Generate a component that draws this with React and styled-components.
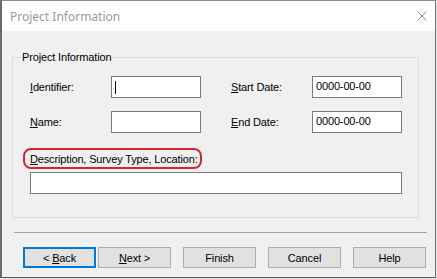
import React from 'react'
import styled, { createGlobalStyle } from 'styled-components';

const GlobalStyle = createGlobalStyle`
    html, body {
        margin: 0;
        padding: 0;
        background: #e6e6e6;
    }
    * {
        box-sizing: border-box;
    }
`;

const Window = styled.div`
    width: 436px;
    height: 278px;
    display: flex;
    flex-direction: column;
    background: #f0f0f0;
    border-top: 1px solid #8c8c8c;
    border-left: 2px solid #6b6b6b;
    border-right: 1px solid #707070;
    border-bottom: 1px solid #5a5a5a;
    font-family: "Liberation Sans", Arial, sans-serif;
    font-size: 11px;
    letter-spacing: -0.15px;
    color: #000;
`;

const TitleBar = styled.div`
    height: 30px;
    flex: none;
    display: flex;
    align-items: center;
    justify-content: space-between;
    padding: 0 8px 0 8px;
    background: #fff;
    color: #999;
    font-family: "Segoe UI", "Noto Sans", sans-serif;
    font-size: 12px;
    letter-spacing: 0;
`;

const CloseIcon = styled.svg`
    width: 10px;
    height: 10px;
`;

const Body = styled.div`
    flex: 1;
    display: flex;
    flex-direction: column;
    padding: 0 9px 0 10px;
`;

const GroupBox = styled.fieldset`
    margin: 20px 7px 0 0;
    padding: 12px 16px 0 17px;
    border: 1px solid #dcdcdc;
    height: 167px;
    display: flex;
    flex-direction: column;
    align-items: flex-start;
`;

const Legend = styled.legend`
    margin-left: -9px;
    padding: 0 1px;
    line-height: 13px;
`;

const FieldGrid = styled.div`
    display: grid;
    grid-template-columns: 81px 90px 30px 81px 90px;
    grid-template-rows: 22px 22px;
    row-gap: 13px;
    align-items: center;
`;

const Label = styled.span`
    grid-column: ${({ col }) => col};
    white-space: nowrap;
`;

const Key = styled.span`
    text-decoration: underline;
    text-underline-offset: 1px;
`;

const Edit = styled.div`
    grid-column: ${({ col }) => col};
    width: ${({ wide }) => (wide ? '372px' : '90px')};
    height: 22px;
    padding: 3px 3px 0;
    background: #fff;
    border: 1px solid #7a7a7a;
    line-height: 13px;
    white-space: nowrap;
`;

const Caret = styled.span`
    display: inline-block;
    width: 1px;
    height: 13px;
    background: #000;
    margin-top: 1px;
`;

const Highlight = styled.div`
    margin: 15px 0 0 -7px;
    padding: 0 2px 0 5px;
    height: 21px;
    display: flex;
    align-items: center;
    border: 2px solid #d42630;
    border-radius: 8px;
`;

const DescEdit = styled(Edit)`
    margin-top: 3px;
`;

const Separator = styled.div`
    height: 1px;
    margin: 14px 0 0 2px;
    width: 413px;
    background: #a0a0a0;
`;

const ButtonRow = styled.div`
    display: flex;
    margin: 14px 0 0 11px;
`;

const Button = styled.button`
    width: 73px;
    height: 21px;
    margin-left: ${({ gap }) => gap}px;
    padding: 0;
    font-family: inherit;
    font-size: 11px;
    letter-spacing: inherit;
    color: #000;
    background: #e1e1e1;
    border: ${({ primary }) => (primary ? '2px solid #0078d7' : '1px solid #adadad')};
`;

const fields = [
    { label: 'Identifier:', key: 'I', col: 1, caret: true },
    { label: 'Start Date:', key: 'S', col: 4, value: '0000-00-00' },
    { label: 'Name:', key: 'N', col: 1 },
    { label: 'End Date:', key: 'E', col: 4, value: '0000-00-00' },
];

const buttons = [
    { text: '< ', key: 'B', rest: 'ack', gap: 0, primary: true },
    { text: '', key: 'N', rest: 'ext >', gap: 2 },
    { text: 'Finish', gap: 12 },
    { text: 'Cancel', gap: 12 },
    { text: 'Help', gap: 12 },
];

const App = () => {
    return (
        <>
            <GlobalStyle />
            <Window>
                <TitleBar>
                    <span>Project Information</span>
                    <CloseIcon viewBox="0 0 10 10">
                        <path d="M0.5 0.5 L9.5 9.5 M9.5 0.5 L0.5 9.5" stroke="#8a8a8a" strokeWidth="1" fill="none" />
                    </CloseIcon>
                </TitleBar>
                <Body>
                    <GroupBox>
                        <Legend>Project Information</Legend>
                        <FieldGrid>
                            {fields.map((f) => (
                                <React.Fragment key={f.label}>
                                    <Label col={f.col}>
                                        <Key>{f.key}</Key>{f.label.slice(1)}
                                    </Label>
                                    <Edit col={f.col + 1}>
                                        {f.caret ? <Caret /> : f.value}
                                    </Edit>
                                </React.Fragment>
                            ))}
                        </FieldGrid>
                        <Highlight>
                            <span><Key>D</Key>escription, Survey Type, Location:</span>
                        </Highlight>
                        <DescEdit wide />
                    </GroupBox>
                    <Separator />
                    <ButtonRow>
                        {buttons.map((b, index) => (
                            <Button key={index} gap={b.gap} primary={b.primary}>
                                {b.text}{b.key && <Key>{b.key}</Key>}{b.rest}
                            </Button>
                        ))}
                    </ButtonRow>
                </Body>
            </Window>
        </>
    )
};

export default App;
